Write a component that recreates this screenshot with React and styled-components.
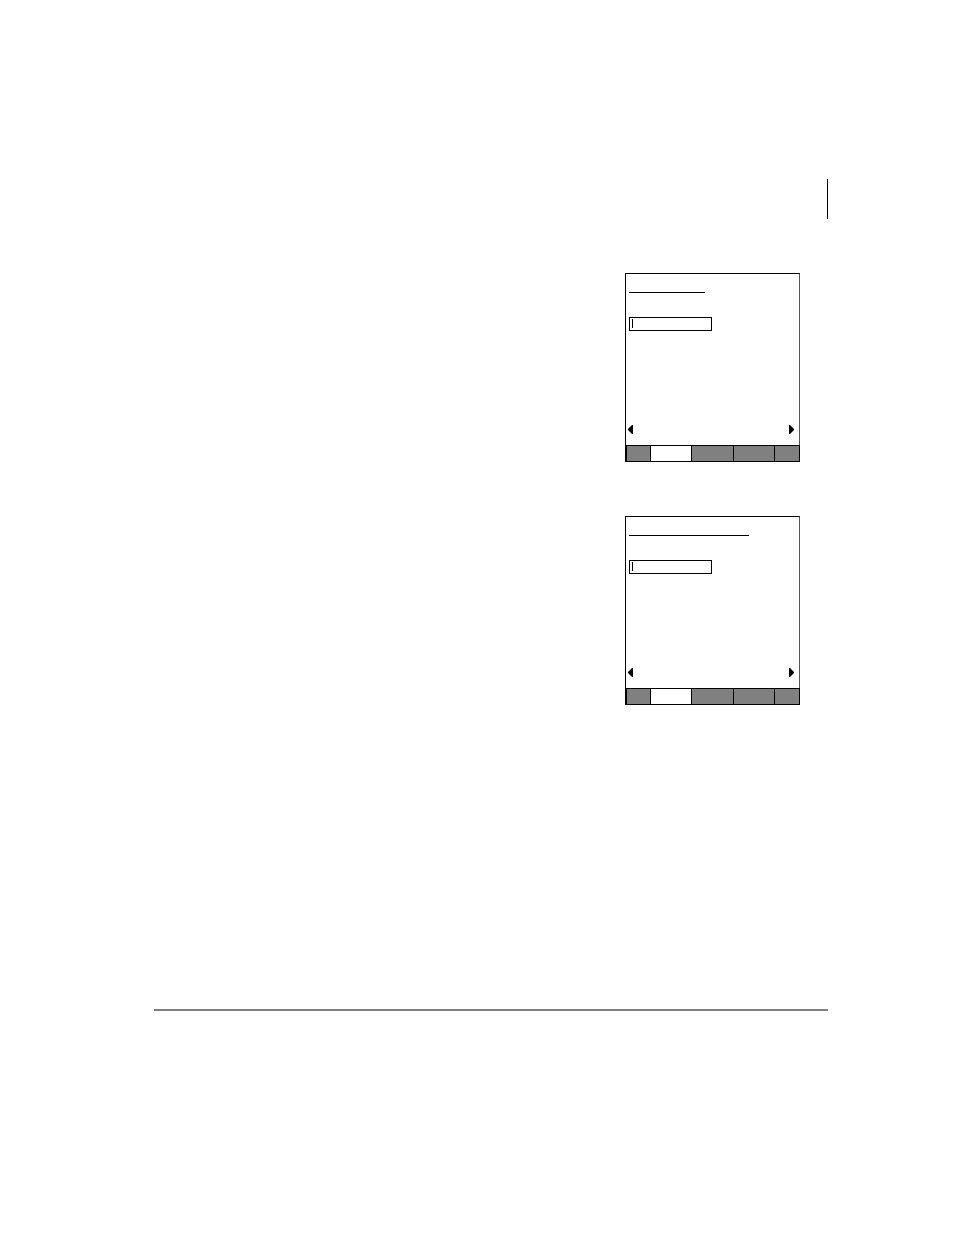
import React from "react"
import styled, { createGlobalStyle } from "styled-components"

const screens = [
  { id: "first", titleWidth: 76 },
  { id: "second", titleWidth: 120 },
]

const tabs = [1, 2, 3, 4, 5]

const Screen = ({ id, titleWidth }) => {
  return (
    <Device>
      <Display>
        <Form>
          <Title lineWidth={titleWidth} />
          <Field>
            <Entry id={`${id}-entry`} type="text" aria-label="Entry" />
            <Caret />
          </Field>
        </Form>
        <Pager>
          <PagerButton type="button" aria-label="Previous">
            <Arrow viewBox="0 0 5 9">
              <path d="M5 0H4L3 1L0 4V5L3 8L4 9H5Z" />
            </Arrow>
          </PagerButton>
          <PagerButton type="button" aria-label="Next">
            <Arrow viewBox="0 0 5 9">
              <path d="M0 0H1L2 1L5 4V5L2 8L1 9H0Z" />
            </Arrow>
          </PagerButton>
        </Pager>
      </Display>
      <TabBar>
        {tabs.map(tab => (
          <Tab
            key={tab}
            type="button"
            aria-label={`Tab ${tab}`}
            $active={tab === 2}
          />
        ))}
      </TabBar>
    </Device>
  )
}

const App = () => {
  return (
    <>
      <GlobalStyle />
      <Page>
        <Header />
        <Screens>
          {screens.map(screen => (
            <Screen key={screen.id} {...screen} />
          ))}
        </Screens>
        <FooterRule />
      </Page>
    </>
  )
}

export default App

const GlobalStyle = createGlobalStyle`
  *,
  *::before,
  *::after {
    box-sizing: border-box;
  }

  body {
    margin: 0;
    background-color: #ffffff;
    font-family: "Liberation Sans", Arial, sans-serif;
  }
`

const Page = styled.div`
  display: flex;
  flex-direction: column;
  min-height: 100vh;
  padding: 179px 126px 224px 154px;
`

const Header = styled.header`
  height: 40px;
  border-right: 1px solid #000000;
`

const Screens = styled.main`
  display: flex;
  flex-direction: column;
  align-items: flex-end;
  gap: 54px;
  padding: 54px 28px;
`

const Device = styled.section`
  width: 175px;
`

const Display = styled.div`
  display: flex;
  flex-direction: column;
  justify-content: space-between;
  min-height: 172px;
  padding-bottom: 11px;
  border: 1px solid #000000;
  border-right-color: #555555;
  border-bottom: 0;
`

const Form = styled.div`
  display: flex;
  flex-direction: column;
  align-items: flex-start;
  gap: 24px;
  padding: 0 3px;
`

const Title = styled.div.withConfig({
  shouldForwardProp: prop => prop !== "lineWidth",
})`
  width: ${props => props.lineWidth}px;
  height: 19px;
  border-bottom: 1px solid #000000;
`

const Field = styled.div`
  position: relative;
  display: flex;
`

const Entry = styled.input`
  width: 83px;
  height: 14px;
  margin: 0;
  padding: 0 4px;
  border: 1px solid #000000;
  border-radius: 0;
  background-color: #ffffff;
  font-family: inherit;
  font-size: 9px;
  outline: none;
`

const Caret = styled.span`
  position: absolute;
  top: 2px;
  left: 3px;
  width: 1px;
  height: 9px;
  background-color: #000000;
  pointer-events: none;
`

const Pager = styled.div`
  display: flex;
  justify-content: space-between;
  padding: 0 5px 0 2px;
`

const PagerButton = styled.button`
  display: flex;
  margin: 0;
  padding: 0;
  border: 0;
  background: none;
  cursor: pointer;
`

const Arrow = styled.svg`
  display: block;
  width: 5px;
  height: 9px;
  fill: #000000;
`

const TabBar = styled.nav`
  display: grid;
  grid-template-columns: 23fr 40fr 41fr 40fr 24fr;
  gap: 1px;
  height: 17px;
  border: 1px solid #000000;
  border-left-width: 2px;
  background-color: #000000;
`

const Tab = styled.button`
  min-width: 0;
  margin: 0;
  padding: 0;
  border: 0;
  border-radius: 0;
  background-color: ${props => (props.$active ? "#ffffff" : "#808080")};
  cursor: pointer;
`

const FooterRule = styled.footer`
  height: 2px;
  margin-top: auto;
  background-color: #808080;
`
